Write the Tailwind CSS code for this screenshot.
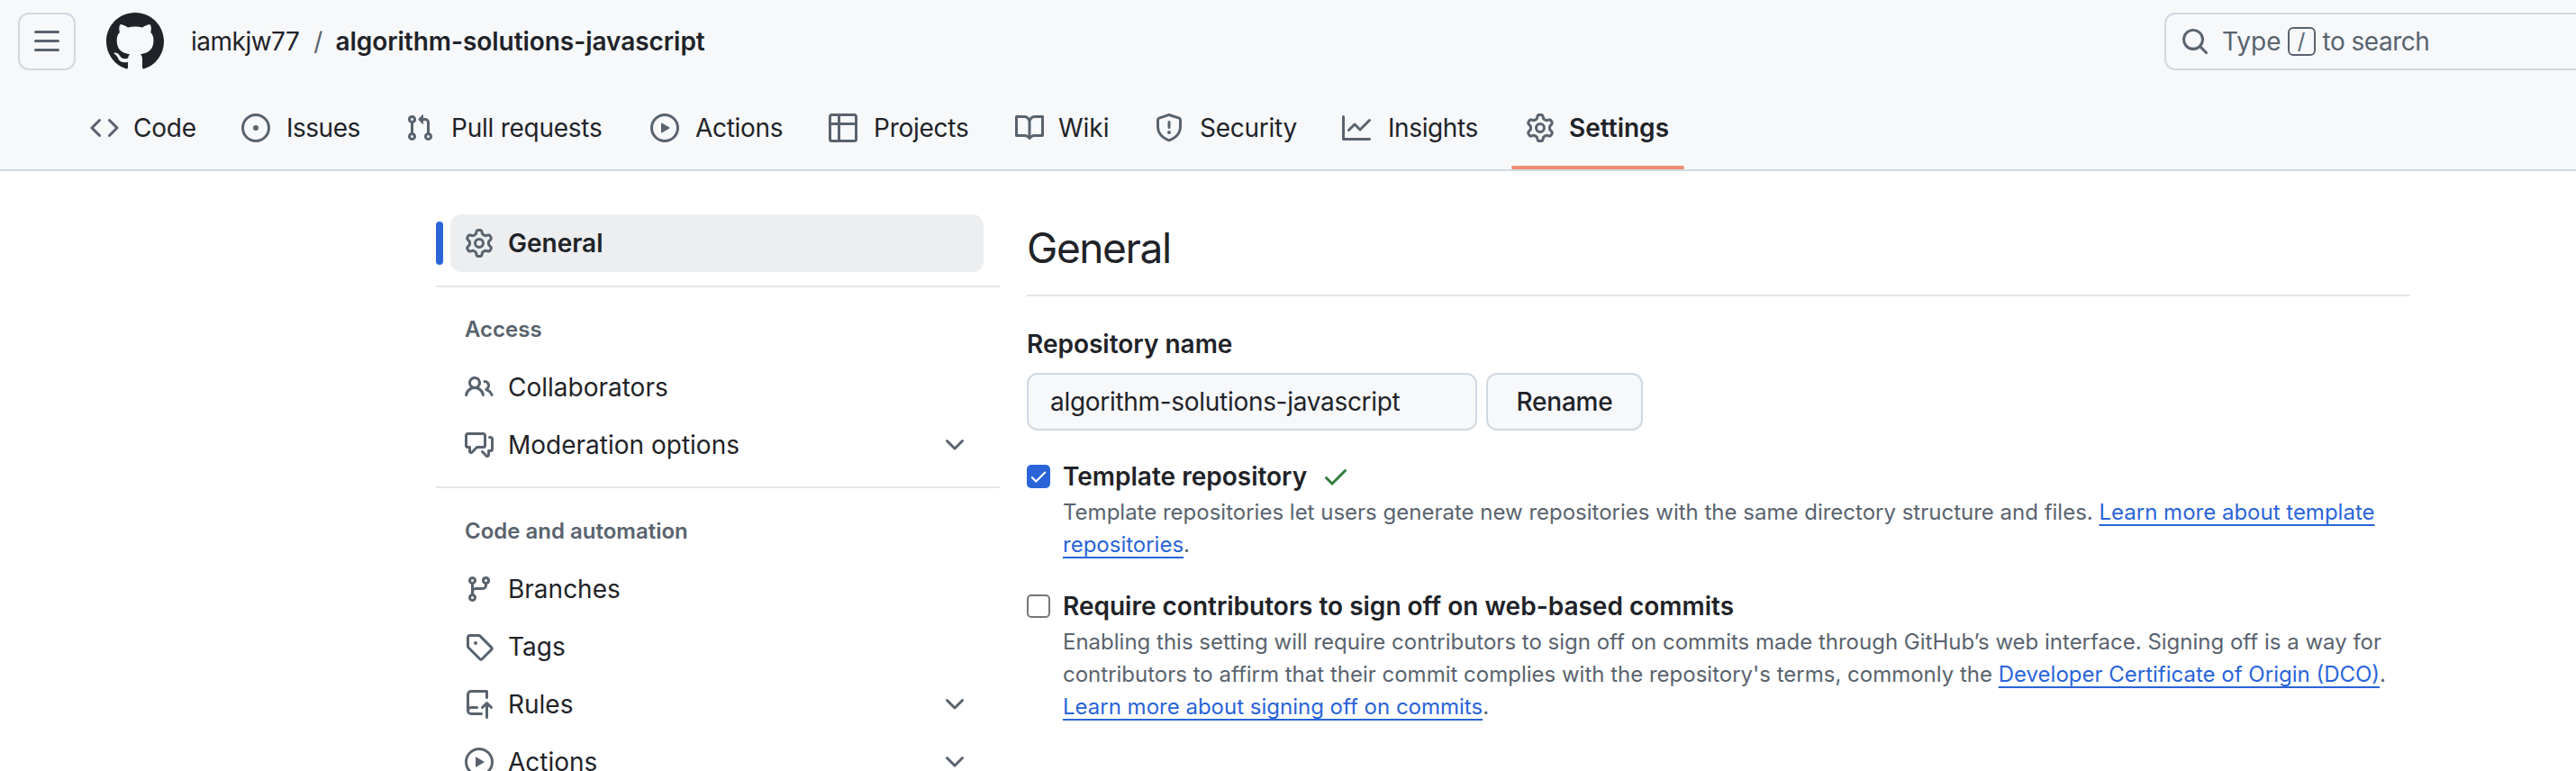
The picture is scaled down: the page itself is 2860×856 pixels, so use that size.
<!DOCTYPE html>
<html lang="en">
  <head>
    <meta charset="UTF-8" />
    <meta name="viewport" content="width=device-width, initial-scale=1.0" />
    <script src="https://cdn.jsdelivr.net/npm/@tailwindcss/browser@4"></script>
    <title>Settings · algorithm-solutions-javascript</title>
  </head>
  <body class="bg-white text-[#1f2328] text-[28px] [font-family:Inter,sans-serif]">
    <!-- octicons, reused below with <use> -->
    <svg class="hidden" xmlns="http://www.w3.org/2000/svg">
      <symbol id="bars" viewBox="0 0 16 16"><path d="M1 2.75A.75.75 0 0 1 1.75 2h12.5a.75.75 0 0 1 0 1.5H1.75A.75.75 0 0 1 1 2.75Zm0 5A.75.75 0 0 1 1.75 7h12.5a.75.75 0 0 1 0 1.5H1.75A.75.75 0 0 1 1 7.75ZM1.75 12h12.5a.75.75 0 0 1 0 1.5H1.75a.75.75 0 0 1 0-1.5Z"/></symbol>
      <symbol id="mark" viewBox="0 0 16 16"><path d="M8 0c4.42 0 8 3.58 8 8a8.013 8.013 0 0 1-5.45 7.59c-.4.08-.55-.17-.55-.38 0-.27.01-1.13.01-2.2 0-.75-.25-1.23-.54-1.48 1.78-.2 3.65-.88 3.65-3.95 0-.88-.31-1.59-.82-2.15.08-.2.36-1.02-.08-2.12 0 0-.67-.22-2.2.82-.64-.18-1.32-.27-2-.27-.68 0-1.36.09-2 .27-1.53-1.03-2.2-.82-2.2-.82-.44 1.1-.16 1.92-.08 2.12-.51.56-.82 1.28-.82 2.15 0 3.06 1.86 3.75 3.64 3.95-.23.2-.44.55-.51 1.07-.46.21-1.61.55-2.33-.66-.15-.24-.6-.83-1.23-.82-.67.01-.27.38.01.53.34.19.73.9.82 1.13.16.45.68 1.31 2.69.94 0 .67.01 1.3.01 1.49 0 .21-.15.45-.55.38A7.995 7.995 0 0 1 0 8c0-4.42 3.58-8 8-8Z"/></symbol>
      <symbol id="code" viewBox="0 0 16 16"><path d="m11.28 3.22 4.25 4.25a.75.75 0 0 1 0 1.06l-4.25 4.25a.749.749 0 0 1-1.275-.326.749.749 0 0 1 .215-.734L13.94 8l-3.72-3.72a.749.749 0 0 1 .326-1.275.749.749 0 0 1 .734.215Zm-6.56 0a.751.751 0 0 1 1.042.018.751.751 0 0 1 .018 1.042L2.06 8l3.72 3.72a.749.749 0 0 1-.326 1.275.749.749 0 0 1-.734-.215L.47 8.53a.75.75 0 0 1 0-1.06Z"/></symbol>
      <symbol id="issue" viewBox="0 0 16 16"><path d="M8 9.5a1.5 1.5 0 1 0 0-3 1.5 1.5 0 0 0 0 3Z"/><path d="M8 0a8 8 0 1 1 0 16A8 8 0 0 1 8 0ZM1.5 8a6.5 6.5 0 1 0 13 0 6.5 6.5 0 0 0-13 0Z"/></symbol>
      <symbol id="pull" viewBox="0 0 16 16"><path d="M1.5 3.25a2.25 2.25 0 1 1 3 2.122v5.256a2.251 2.251 0 1 1-1.5 0V5.372A2.25 2.25 0 0 1 1.5 3.25Zm5.677-.177L9.573.677A.25.25 0 0 1 10 .854V2.5h1A2.5 2.5 0 0 1 13.5 5v5.628a2.251 2.251 0 1 1-1.5 0V5a1 1 0 0 0-1-1h-1v1.646a.25.25 0 0 1-.427.177L7.177 3.427a.25.25 0 0 1 0-.354ZM3.75 2.5a.75.75 0 1 0 0 1.5.75.75 0 0 0 0-1.5Zm0 9.5a.75.75 0 1 0 0 1.5.75.75 0 0 0 0-1.5Zm8.25.75a.75.75 0 1 0 1.5 0 .75.75 0 0 0-1.5 0Z"/></symbol>
      <symbol id="play" viewBox="0 0 16 16"><path d="M8 0a8 8 0 1 1 0 16A8 8 0 0 1 8 0ZM1.5 8a6.5 6.5 0 1 0 13 0 6.5 6.5 0 0 0-13 0Zm4.879-2.773 4.264 2.559a.25.25 0 0 1 0 .428l-4.264 2.559A.25.25 0 0 1 6 10.559V5.442a.25.25 0 0 1 .379-.215Z"/></symbol>
      <symbol id="table" viewBox="0 0 16 16"><path d="M0 1.75C0 .784.784 0 1.75 0h12.5C15.216 0 16 .784 16 1.75v12.5A1.75 1.75 0 0 1 14.25 16H1.75A1.75 1.75 0 0 1 0 14.25ZM6.5 6.5v8h7.75a.25.25 0 0 0 .25-.25V6.5Zm8-1.5V1.75a.25.25 0 0 0-.25-.25H6.5V5Zm-13 1.5v7.75c0 .138.112.25.25.25H5v-8ZM5 5V1.5H1.75a.25.25 0 0 0-.25.25V5Z"/></symbol>
      <symbol id="book" viewBox="0 0 16 16"><path d="M0 1.75A.75.75 0 0 1 .75 1h4.253c1.227 0 2.317.59 3 1.501A3.743 3.743 0 0 1 11.006 1h4.245a.75.75 0 0 1 .75.75v10.5a.75.75 0 0 1-.75.75h-4.507a2.25 2.25 0 0 0-1.591.659l-.622.621a.75.75 0 0 1-1.06 0l-.622-.621A2.25 2.25 0 0 0 5.258 13H.75a.75.75 0 0 1-.75-.75Zm7.251 10.324.004-5.073-.002-2.253A2.25 2.25 0 0 0 5.003 2.5H1.5v9h3.757a3.75 3.75 0 0 1 1.994.574ZM8.755 4.75l-.004 7.322a3.752 3.752 0 0 1 1.992-.572H14.5v-9h-3.495a2.25 2.25 0 0 0-2.25 2.25Z"/></symbol>
      <symbol id="shield" viewBox="0 0 16 16"><path d="M7.467.133a1.748 1.748 0 0 1 1.066 0l5.25 1.68A1.75 1.75 0 0 1 15 3.48V7c0 1.566-.32 3.182-1.303 4.682-.983 1.498-2.585 2.813-5.032 3.855a1.697 1.697 0 0 1-1.33 0c-2.447-1.042-4.049-2.357-5.032-3.855C1.32 10.182 1 8.566 1 7V3.48a1.75 1.75 0 0 1 1.217-1.667Zm.61 1.429a.25.25 0 0 0-.153 0l-5.25 1.68a.25.25 0 0 0-.174.238V7c0 1.358.275 2.666 1.057 3.86.784 1.194 2.121 2.34 4.366 3.297a.196.196 0 0 0 .154 0c2.245-.956 3.582-2.104 4.366-3.298C13.225 9.666 13.5 8.36 13.5 7V3.48a.251.251 0 0 0-.174-.237l-5.25-1.68ZM8.75 4.75v3a.75.75 0 0 1-1.5 0v-3a.75.75 0 0 1 1.5 0ZM9 10.5a1 1 0 1 1-2 0 1 1 0 0 1 2 0Z"/></symbol>
      <symbol id="graph" viewBox="0 0 16 16"><path d="M1.5 1.75V13.5h13.75a.75.75 0 0 1 0 1.5H.75a.75.75 0 0 1-.75-.75V1.75a.75.75 0 0 1 1.5 0Zm14.28 2.53-5.25 5.25a.75.75 0 0 1-1.06 0L7 7.06 4.28 9.78a.751.751 0 0 1-1.042-.018.751.751 0 0 1-.018-1.042l3.25-3.25a.75.75 0 0 1 1.06 0L10 7.94l4.72-4.72a.751.751 0 0 1 1.042.018.751.751 0 0 1 .018 1.042Z"/></symbol>
      <symbol id="gear" viewBox="0 0 16 16"><path d="M8 0a8.2 8.2 0 0 1 .701.031C9.444.095 9.99.645 10.16 1.29l.288 1.107c.018.066.079.158.212.224.231.114.454.243.668.386.123.082.233.09.299.071l1.103-.303c.644-.176 1.392.021 1.82.63.27.385.506.792.704 1.218.315.675.111 1.422-.364 1.891l-.814.806c-.049.048-.098.147-.088.294.016.257.016.515 0 .772-.01.147.038.246.088.294l.814.806c.475.469.679 1.216.364 1.891a7.977 7.977 0 0 1-.704 1.217c-.428.61-1.176.807-1.82.63l-1.102-.302c-.067-.019-.177-.011-.3.071a5.909 5.909 0 0 1-.668.386c-.133.066-.194.158-.211.224l-.29 1.106c-.168.646-.715 1.196-1.458 1.26a8.006 8.006 0 0 1-1.402 0c-.743-.064-1.289-.614-1.458-1.26l-.289-1.106c-.018-.066-.079-.158-.212-.224a5.738 5.738 0 0 1-.668-.386c-.123-.082-.233-.09-.299-.071l-1.103.303c-.644.176-1.392-.021-1.82-.63a8.12 8.12 0 0 1-.704-1.218c-.315-.675-.111-1.422.363-1.891l.815-.806c.05-.048.098-.147.088-.294a6.214 6.214 0 0 1 0-.772c.01-.147-.038-.246-.088-.294l-.815-.806C.635 6.045.431 5.298.746 4.623a7.92 7.92 0 0 1 .704-1.217c.428-.61 1.176-.807 1.82-.63l1.102.302c.067.019.177.011.3-.071.214-.143.437-.272.668-.386.133-.066.194-.158.211-.224l.29-1.106C6.009.645 6.556.095 7.299.03 7.53.01 7.764 0 8 0Zm-.571 1.525c-.036.003-.108.036-.137.146l-.289 1.105c-.147.561-.549.967-.998 1.189-.173.086-.34.183-.5.29-.417.278-.97.423-1.529.27l-1.103-.303c-.109-.03-.175.016-.195.045-.22.312-.412.644-.573.99-.014.031-.021.11.059.19l.815.806c.411.406.562.957.53 1.456a4.709 4.709 0 0 0 0 .582c.032.499-.119 1.05-.53 1.456l-.815.806c-.081.08-.073.159-.059.19.162.346.353.677.573.989.02.03.085.076.195.046l1.102-.303c.56-.153 1.113-.008 1.53.27.161.107.328.204.501.29.447.222.85.629.997 1.189l.289 1.105c.029.109.101.143.137.146a6.6 6.6 0 0 0 1.142 0c.036-.003.108-.036.137-.146l.289-1.105c.147-.561.549-.967.998-1.189.173-.086.34-.183.5-.29.417-.278.97-.423 1.529-.27l1.103.303c.109.029.175-.016.195-.045.22-.313.411-.644.573-.99.014-.031.021-.11-.059-.19l-.815-.806c-.411-.406-.562-.957-.53-1.456a4.709 4.709 0 0 0 0-.582c-.032-.499.119-1.05.53-1.456l.815-.806c.081-.08.073-.159.059-.19a6.464 6.464 0 0 0-.573-.989c-.02-.03-.085-.076-.195-.046l-1.102.303c-.56.153-1.113.008-1.53-.27a4.44 4.44 0 0 0-.501-.29c-.447-.222-.85-.629-.997-1.189l-.289-1.105c-.029-.11-.101-.143-.137-.146a6.6 6.6 0 0 0-1.142 0ZM11 8a3 3 0 1 1-6 0 3 3 0 0 1 6 0ZM9.5 8a1.5 1.5 0 1 0-3.001.001A1.5 1.5 0 0 0 9.5 8Z"/></symbol>
      <symbol id="search" viewBox="0 0 16 16"><path d="M10.68 11.74a6 6 0 0 1-7.922-8.982 6 6 0 0 1 8.982 7.922l3.04 3.04a.749.749 0 0 1-.326 1.275.749.749 0 0 1-.734-.215ZM11.5 7a4.499 4.499 0 1 0-8.997 0A4.499 4.499 0 0 0 11.5 7Z"/></symbol>
      <symbol id="people" viewBox="0 0 16 16"><path d="M2 5.5a3.5 3.5 0 1 1 5.898 2.549 5.508 5.508 0 0 1 3.034 4.084.75.75 0 1 1-1.482.235 4 4 0 0 0-7.9 0 .75.75 0 0 1-1.482-.236A5.507 5.507 0 0 1 3.102 8.05 3.493 3.493 0 0 1 2 5.5ZM11 4a3.001 3.001 0 0 1 2.22 5.018 5.01 5.01 0 0 1 2.56 3.012.749.749 0 0 1-.885.954.752.752 0 0 1-.549-.514 3.507 3.507 0 0 0-2.522-2.372.75.75 0 0 1-.574-.73v-.352a.75.75 0 0 1 .416-.672A1.5 1.5 0 0 0 11 5.5.75.75 0 0 1 11 4Zm-5.5-.5a2 2 0 1 0-.001 3.999A2 2 0 0 0 5.5 3.5Z"/></symbol>
      <symbol id="discussion" viewBox="0 0 16 16"><path d="M1.75 1h8.5c.966 0 1.75.784 1.75 1.75v5.5A1.75 1.75 0 0 1 10.25 10H7.061l-2.574 2.573A1.458 1.458 0 0 1 2 11.543V10h-.25A1.75 1.75 0 0 1 0 8.25v-5.5C0 1.784.784 1 1.75 1ZM1.5 2.75v5.5c0 .138.112.25.25.25h1a.75.75 0 0 1 .75.75v2.19l2.72-2.72a.749.749 0 0 1 .53-.22h3.5a.25.25 0 0 0 .25-.25v-5.5a.25.25 0 0 0-.25-.25h-8.5a.25.25 0 0 0-.25.25Zm13 2a.25.25 0 0 0-.25-.25h-.5a.75.75 0 0 1 0-1.5h.5c.966 0 1.75.784 1.75 1.75v5.5A1.75 1.75 0 0 1 14.25 12H14v1.543a1.458 1.458 0 0 1-2.487 1.03L9.22 12.28a.749.749 0 0 1 .326-1.275.749.749 0 0 1 .734.215l2.22 2.22v-2.19a.75.75 0 0 1 .75-.75h1a.25.25 0 0 0 .25-.25Z"/></symbol>
      <symbol id="chevron" viewBox="0 0 16 16"><path d="M12.78 5.22a.749.749 0 0 1 0 1.06l-4.25 4.25a.749.749 0 0 1-1.06 0L3.22 6.28a.749.749 0 1 1 1.06-1.06L8 8.939l3.72-3.719a.749.749 0 0 1 1.06 0Z"/></symbol>
      <symbol id="branch" viewBox="0 0 16 16"><path d="M9.5 3.25a2.25 2.25 0 1 1 3 2.122V6A2.5 2.5 0 0 1 10 8.5H6a1 1 0 0 0-1 1v1.128a2.251 2.251 0 1 1-1.5 0V5.372a2.25 2.25 0 1 1 1.5 0v1.836A2.493 2.493 0 0 1 6 7h4a1 1 0 0 0 1-1v-.628A2.25 2.25 0 0 1 9.5 3.25Zm-6 0a.75.75 0 1 0 1.5 0 .75.75 0 0 0-1.5 0Zm8.25-.75a.75.75 0 1 0 0 1.5.75.75 0 0 0 0-1.5ZM4.25 12a.75.75 0 1 0 0 1.5.75.75 0 0 0 0-1.5Z"/></symbol>
      <symbol id="tag" viewBox="0 0 16 16"><path d="M1 7.775V2.75C1 1.784 1.784 1 2.75 1h5.025c.464 0 .91.184 1.238.513l6.25 6.25a1.75 1.75 0 0 1 0 2.474l-5.026 5.026a1.75 1.75 0 0 1-2.474 0l-6.25-6.25A1.752 1.752 0 0 1 1 7.775Zm1.5 0c0 .066.026.13.073.177l6.25 6.25a.25.25 0 0 0 .354 0l5.025-5.025a.25.25 0 0 0 0-.354l-6.25-6.25a.25.25 0 0 0-.177-.073H2.75a.25.25 0 0 0-.25.25ZM6 5a1 1 0 1 1 0 2 1 1 0 0 1 0-2Z"/></symbol>
      <symbol id="rules" viewBox="0 0 16 16"><path d="M1 2.5A2.5 2.5 0 0 1 3.5 0h8.75a.75.75 0 0 1 .75.75v3.5a.75.75 0 0 1-1.5 0V1.5h-8a1 1 0 0 0-1 1v6.708A2.493 2.493 0 0 1 3.5 9h3.25a.75.75 0 0 1 0 1.5H3.5a1 1 0 0 0 0 2h5.75a.75.75 0 0 1 0 1.5H3.5A2.5 2.5 0 0 1 1 11.5Zm13.23 7.79h-.001l-1.224-1.224v6.184a.75.75 0 0 1-1.5 0V9.066L10.28 10.29a.75.75 0 0 1-1.06-1.061l2.505-2.504a.75.75 0 0 1 1.06 0L15.29 9.23a.751.751 0 0 1-.018 1.042.751.751 0 0 1-1.042.018Z"/></symbol>
      <symbol id="check" viewBox="0 0 16 16"><path d="M13.78 4.22a.75.75 0 0 1 0 1.06l-7.25 7.25a.75.75 0 0 1-1.06 0L2.22 9.28a.751.751 0 0 1 .018-1.042.751.751 0 0 1 1.042-.018L6 10.94l6.72-6.72a.75.75 0 0 1 1.06 0Z"/></symbol>
    </svg>

    <div class="h-[856px] overflow-hidden">
      <header class="h-[190px] bg-[#f6f8fa] border-b-2 border-[#d1d9e0]">
        <div class="h-[78px] pt-[14px] pl-[20px] flex items-center">
          <button class="w-[64px] h-[64px] shrink-0 flex items-center justify-center rounded-[12px] border-2 border-[#d1d9e0]">
            <svg class="w-[32px] h-[32px] fill-[#59636e]"><use href="#bars" /></svg>
          </button>
          <svg class="w-[64px] h-[64px] ml-[34px] shrink-0 fill-[#1f2328]"><use href="#mark" /></svg>
          <span class="ml-[30px] tracking-[-0.5px]">iamkjw77</span>
          <span class="ml-[16px] text-[#59636e]">/</span>
          <span class="ml-[14px] font-semibold tracking-[-0.05px]">algorithm-solutions-javascript</span>
          <div class="ml-auto w-[477px] h-[64px] -mr-[20px] shrink-0 flex items-center pl-[16px] rounded-l-[12px] border-2 border-r-0 border-[#d1d9e0] text-[#59636e]">
            <svg class="w-[32px] h-[32px] fill-[#59636e]"><use href="#search" /></svg>
            <span class="ml-[14px]">Type</span>
            <span class="ml-[7px] w-[31px] h-[32px] flex items-center justify-center rounded-[6px] border-2 border-[#59636e] text-[24px]">/</span>
            <span class="ml-[8px] tracking-[-0.5px]">to search</span>
          </div>
        </div>
        <nav class="h-[110px] pl-[84px] flex">
          <a class="h-full pt-[18px] px-[16px] flex items-center gap-[16px] w-[168px] tracking-[-0.2px]"><svg class="w-[32px] h-[32px] shrink-0 fill-[#59636e]"><use href="#code" /></svg>Code</a>
          <a class="h-full pt-[18px] px-[16px] flex items-center gap-[18px] w-[182px] tracking-[-0.5px]"><svg class="w-[32px] h-[32px] shrink-0 fill-[#59636e]"><use href="#issue" /></svg>Issues</a>
          <a class="h-full pt-[18px] px-[16px] flex items-center gap-[19px] w-[272px] tracking-[-0.25px]"><svg class="w-[32px] h-[32px] shrink-0 fill-[#59636e]"><use href="#pull" /></svg>Pull requests</a>
          <a class="h-full pt-[18px] px-[16px] flex items-center gap-[18px] w-[198px] tracking-[-0.3px]"><svg class="w-[32px] h-[32px] shrink-0 fill-[#59636e]"><use href="#play" /></svg>Actions</a>
          <a class="h-full pt-[18px] px-[16px] flex items-center gap-[18px] w-[207px] tracking-[-0.25px]"><svg class="w-[32px] h-[32px] shrink-0 fill-[#59636e]"><use href="#table" /></svg>Projects</a>
          <a class="h-full pt-[18px] px-[16px] flex items-center gap-[16px] w-[155px]"><svg class="w-[32px] h-[32px] shrink-0 fill-[#59636e]"><use href="#book" /></svg>Wiki</a>
          <a class="h-full pt-[18px] px-[16px] flex items-center gap-[18px] w-[208px] tracking-[-0.25px]"><svg class="w-[32px] h-[32px] shrink-0 fill-[#59636e]"><use href="#shield" /></svg>Security</a>
          <a class="h-full pt-[18px] px-[16px] flex items-center gap-[19px] w-[204px] tracking-[-0.4px]"><svg class="w-[32px] h-[32px] shrink-0 fill-[#59636e]"><use href="#graph" /></svg>Insights</a>
          <a class="relative h-full pt-[18px] px-[16px] flex items-center gap-[16px] w-[192px] font-semibold">
            <svg class="w-[32px] h-[32px] shrink-0 fill-[#59636e]"><use href="#gear" /></svg>Settings
            <span class="absolute left-0 right-0 bottom-0 h-[4px] rounded-[2px] bg-[#ef8d73]"></span>
          </a>
        </nav>
      </header>

      <div class="pl-[484px] flex">
        <aside class="w-[626px] shrink-0 pt-[48px]">
          <a class="relative ml-[16px] w-[592px] h-[64px] pl-[16px] flex items-center gap-[16px] rounded-[12px] bg-[#eceef0] font-semibold">
            <span class="absolute -left-[16px] top-[8px] w-[8px] h-[48px] rounded-[6px] bg-[#2a64d8]"></span>
            <svg class="w-[32px] h-[32px] fill-[#59636e]"><use href="#gear" /></svg>General
          </a>
          <div class="mt-[15px] h-[2px] bg-[#e3e6ea]"></div>
          <div class="h-[79px] pt-[15px] pl-[32px] flex items-center text-[24px] font-semibold text-[#59636e]">Access</div>
          <a class="ml-[16px] w-[592px] h-[64px] pl-[16px] flex items-center gap-[16px]"><svg class="w-[32px] h-[32px] fill-[#59636e]"><use href="#people" /></svg>Collaborators</a>
          <a class="ml-[16px] w-[592px] h-[64px] px-[16px] flex items-center gap-[16px]"><svg class="w-[32px] h-[32px] fill-[#59636e]"><use href="#discussion" /></svg>Moderation options<svg class="ml-auto w-[32px] h-[32px] fill-[#59636e]"><use href="#chevron" /></svg></a>
          <div class="mt-[14px] h-[2px] bg-[#e3e6ea]"></div>
          <div class="h-[80px] pt-[16px] pl-[32px] flex items-center text-[24px] font-semibold text-[#59636e]">Code and automation</div>
          <a class="ml-[16px] w-[592px] h-[64px] pl-[16px] flex items-center gap-[16px]"><svg class="w-[32px] h-[32px] fill-[#59636e]"><use href="#branch" /></svg>Branches</a>
          <a class="ml-[16px] w-[592px] h-[64px] pl-[16px] flex items-center gap-[16px]"><svg class="w-[32px] h-[32px] fill-[#59636e]"><use href="#tag" /></svg>Tags</a>
          <a class="ml-[16px] w-[592px] h-[64px] px-[16px] flex items-center gap-[16px]"><svg class="w-[32px] h-[32px] fill-[#59636e]"><use href="#rules" /></svg>Rules<svg class="ml-auto w-[32px] h-[32px] fill-[#59636e]"><use href="#chevron" /></svg></a>
          <a class="ml-[16px] w-[592px] h-[64px] px-[16px] flex items-center gap-[16px]"><svg class="w-[32px] h-[32px] fill-[#59636e]"><use href="#play" /></svg>Actions<svg class="ml-auto w-[32px] h-[32px] fill-[#59636e]"><use href="#chevron" /></svg></a>
        </aside>

        <main class="ml-[30px] w-[1536px]">
          <h2 class="pt-[55px] pb-[22px] text-[46px] leading-[60px] font-normal tracking-[-1.4px] border-b-2 border-[#e3e6ea]">General</h2>
          <label class="block mt-[35px] leading-[36px] font-semibold">Repository name</label>
          <div class="mt-[14px] flex gap-[10px]">
            <div class="w-[500px] h-[64px] pl-[24px] flex items-center rounded-[12px] border-2 border-[#d1d9e0] bg-[#f6f8fa] tracking-[-0.3px]">algorithm-solutions-javascript</div>
            <button class="w-[174px] h-[64px] rounded-[12px] border-2 border-[#d1d9e0] bg-[#f6f8fa] font-medium tracking-[-0.2px]">Rename</button>
          </div>

          <div class="mt-[33px] flex gap-[14px]">
            <span class="mt-[5px] w-[26px] h-[26px] shrink-0 flex items-center justify-center rounded-[5px] bg-[#2a64d8]">
              <svg class="w-[22px] h-[22px] fill-white"><use href="#check" /></svg>
            </span>
            <div>
              <div class="flex items-center gap-[16px] leading-[36px] font-semibold">Template repository
                <svg class="w-[32px] h-[32px] fill-[#2f7d3b]"><use href="#check" /></svg>
              </div>
              <p class="mt-[4px] text-[24px] leading-[36px] text-[#59636e] whitespace-nowrap">Template repositories let users generate new repositories with the same directory structure and files. <a class="text-[#2a64d8] underline decoration-2 underline-offset-[5px]">Learn more about template<br />repositories</a>.</p>
            </div>
          </div>

          <div class="mt-[32px] flex gap-[14px]">
            <span class="mt-[5px] w-[26px] h-[26px] shrink-0 rounded-[5px] border-2 border-[#767676] bg-white"></span>
            <div>
              <div class="leading-[36px] font-semibold">Require contributors to sign off on web-based commits</div>
              <p class="mt-[4px] text-[24px] leading-[36px] text-[#59636e] whitespace-nowrap">Enabling this setting will require contributors to sign off on commits made through GitHub’s web interface. Signing off is a way for<br />contributors to affirm that their commit complies with the repository's terms, commonly the <a class="text-[#2a64d8] underline decoration-2 underline-offset-[5px]">Developer Certificate of Origin (DCO)</a>.<br /><a class="text-[#2a64d8] underline decoration-2 underline-offset-[5px]">Learn more about signing off on commits</a>.</p>
            </div>
          </div>
        </main>
      </div>
    </div>
  </body>
</html>
